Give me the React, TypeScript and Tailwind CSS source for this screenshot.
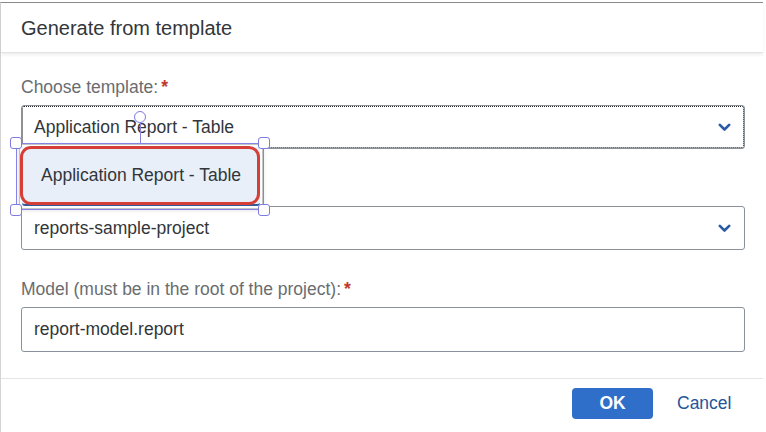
import React from "react";

const font = { fontFamily: '"Liberation Sans", Arial, sans-serif' };

function Chevron() {
  return (
    <svg width="13" height="9" viewBox="0 0 13 9" className="shrink-0">
      <path d="M1.8 1.8 L6.5 6.5 L11.2 1.8" fill="none" stroke="#2a5ca6" strokeWidth="2.6" strokeLinecap="round" strokeLinejoin="round" />
    </svg>
  );
}

function Label({ text }: { text: string }) {
  return (
    <div className="text-[17.5px] leading-[20px] text-[#6a6d70] flex">
      <span>{text}</span>
      <span className="text-[#c0392b] ml-[3px] font-bold">*</span>
    </div>
  );
}

function Select({ value, focused }: { value: string; focused?: boolean }) {
  return (
    <div
      className={
        "h-[44px] border border-[#89919a] rounded-[3px] bg-white flex items-center pl-[12px] pr-[13px] text-[17.5px] text-[#32363a] " +
        (focused ? "outline outline-1 outline-dotted outline-[#222] -outline-offset-[2px]" : "")
      }
    >
      <span className="flex-1">{value}</span>
      <Chevron />
    </div>
  );
}

function Handle({ x, y }: { x: number; y: number }) {
  return (
    <div
      className="absolute w-[12px] h-[12px] rounded-[3px] bg-white border-[1.5px] border-[#7d7be0]"
      style={{ left: x - 6, top: y - 6 }}
    />
  );
}

export default function App() {
  return (
    <div className="relative w-[766px] h-[432px] bg-white overflow-hidden" style={font}>
      <div className="mt-[2px] w-[763px] h-[430px] border-t border-l border-t-[#8a8a8a] border-l-[#d4d4d4] flex flex-col">
        <div className="h-[50px] flex items-center pl-[20px] text-[20px] text-[#32363a] border-b border-[#e2e2e2] shadow-[0_2px_3px_rgba(0,0,0,0.07)]">
          Generate from template
        </div>

        <div className="flex flex-col pl-[20px] pr-[18px] pt-[24px] pb-[26px] border-b border-[#e4e4e4]">
          <Label text="Choose template:" />
          <div className="mt-[8px]">
            <Select value="Application Report - Table" focused />
          </div>
          {/* project label sits under the open list */}
          <div className="mt-[29px] h-[20px]" />
          <div className="mt-[8px]">
            <Select value="reports-sample-project" />
          </div>
          <div className="mt-[29px]">
            <Label text="Model (must be in the root of the project):" />
          </div>
          <div className="mt-[8px] h-[45px] border border-[#89919a] rounded-[3px] flex items-center pl-[12px] text-[17.5px] text-[#32363a]">
            report-model.report
          </div>
        </div>

        <div className="flex items-start pt-[9px] pl-[571px]">
          <button className="w-[81px] h-[31px] rounded-[4px] bg-[#2f6fca] text-white font-bold text-[17.5px] flex items-center justify-center">
            OK
          </button>
          <button className="ml-[24px] h-[31px] text-[17.5px] text-[#24569a] flex items-center">Cancel</button>
        </div>
      </div>

      {/* dropdown popup */}
      <div className="absolute left-[19px] top-[144px] w-[244px] h-[65px] bg-white border border-[#c4c4c4] rounded-[3px] shadow-[0_1px_4px_rgba(0,0,0,0.15)] p-[2px]">
        <div className="h-full bg-[#e8eff8] border-b-[2px] border-[#2f5b9c] rounded-[3px] flex items-center pl-[19px] text-[17.5px] text-[#32363a]">
          Application Report - Table
        </div>
      </div>
      {/* red annotation */}
      <div className="absolute left-[20px] top-[146px] w-[240px] h-[59px] border-[3px] border-[#d63f38] rounded-[11px]" />

      {/* selection frame */}
      <div className="absolute left-[16px] top-[143px] w-[248px] h-[67px] border border-[#8583e6]" />
      <div className="absolute left-[140px] top-[122px] w-px h-[21px] bg-[#8583e6]" />
      <div className="absolute left-[134px] top-[111px] w-[12px] h-[12px] rounded-full bg-white/60 border-[1.5px] border-[#7d7be0]" />
      <Handle x={16} y={143} />
      <Handle x={264} y={143} />
      <Handle x={16} y={210} />
      <Handle x={264} y={210} />
    </div>
  );
}
